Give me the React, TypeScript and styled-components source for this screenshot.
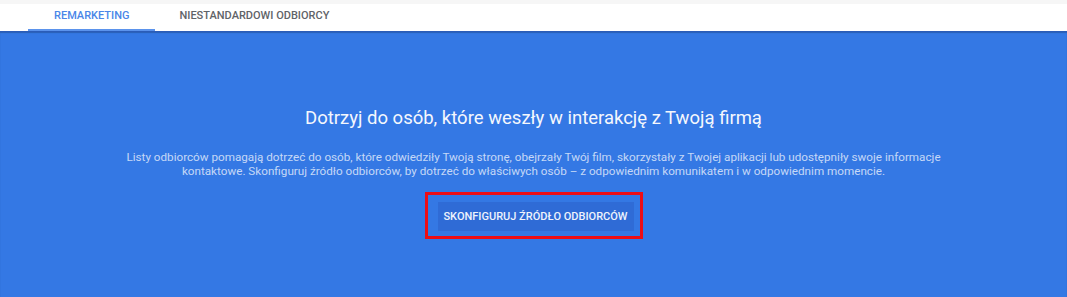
import styled, { createGlobalStyle } from "styled-components";

const GlobalStyle = createGlobalStyle`
  html, body {
    margin: 0;
    padding: 0;
    background: #3478e4;
    font-family: Roboto, "Liberation Sans", Arial, sans-serif;
  }
`;

const Page = styled.div`
  width: 1067px;
  height: 297px;
  display: flex;
  flex-direction: column;
  background: #3478e4;
`;

const TopStrip = styled.div`
  height: 4px;
  background: #f6f6f6;
`;

const TabBar = styled.div`
  height: 27px;
  display: flex;
  align-items: stretch;
  padding-left: 28px;
  background: #ffffff;
`;

const Tab = styled.div<{ $active?: boolean }>`
  position: relative;
  display: flex;
  align-items: center;
  justify-content: center;
  padding: 0 ${(p) => (p.$active ? "26px" : "24px")};
  font-size: 11px;
  font-weight: 500;
  color: ${(p) => (p.$active ? "#4a86e8" : "#5f6368")};
  padding-bottom: 4px;

  &::after {
    content: "";
    position: absolute;
    left: 0;
    right: 0;
    bottom: 0;
    height: 2px;
    background: ${(p) => (p.$active ? "#5b93ec" : "transparent")};
  }
`;

const Hero = styled.div`
  flex: 1;
  display: flex;
  flex-direction: column;
  align-items: center;
  border-top: 1px solid #2a5cb8;
  box-shadow: inset 0 1px 1px rgba(0, 0, 0, 0.2);
  padding-top: 74px;
  color: #ffffff;
`;

const Title = styled.h1`
  margin: 0;
  font-size: 18.5px;
  font-weight: 400;
  line-height: 24px;
  color: #f4f7fd;
`;

const Description = styled.p`
  margin: 20px 0 0;
  width: 830px;
  text-align: center;
  font-size: 11.7px;
  line-height: 14px;
  color: rgba(255, 255, 255, 0.72);
`;

const Highlight = styled.div`
  margin-top: 14px;
  border: 3px solid #ee0d14;
  padding: 7px 6px 5px 10px;
  display: flex;
`;

const ConfigButton = styled.button`
  border: none;
  background: #2f6bd6;
  color: #eef3fc;
  font-family: inherit;
  font-size: 11px;
  font-weight: 500;
  height: 29px;
  width: 196px;
  padding: 0;
  cursor: pointer;
`;

export default function App() {
  return (
    <>
      <GlobalStyle />
      <Page>
        <TopStrip />
        <TabBar>
          <Tab $active>REMARKETING</Tab>
          <Tab>NIESTANDARDOWI ODBIORCY</Tab>
        </TabBar>
        <Hero>
          <Title>Dotrzyj do osób, które weszły w interakcję z Twoją firmą</Title>
          <Description>
            Listy odbiorców pomagają dotrzeć do osób, które odwiedziły Twoją
            stronę, obejrzały Twój film, skorzystały z Twojej aplikacji lub
            udostępniły swoje informacje kontaktowe. Skonfiguruj źródło
            odbiorców, by dotrzeć do właściwych osób – z odpowiednim
            komunikatem i w odpowiednim momencie.
          </Description>
          <Highlight>
            <ConfigButton>SKONFIGURUJ ŹRÓDŁO ODBIORCÓW</ConfigButton>
          </Highlight>
        </Hero>
      </Page>
    </>
  );
}
